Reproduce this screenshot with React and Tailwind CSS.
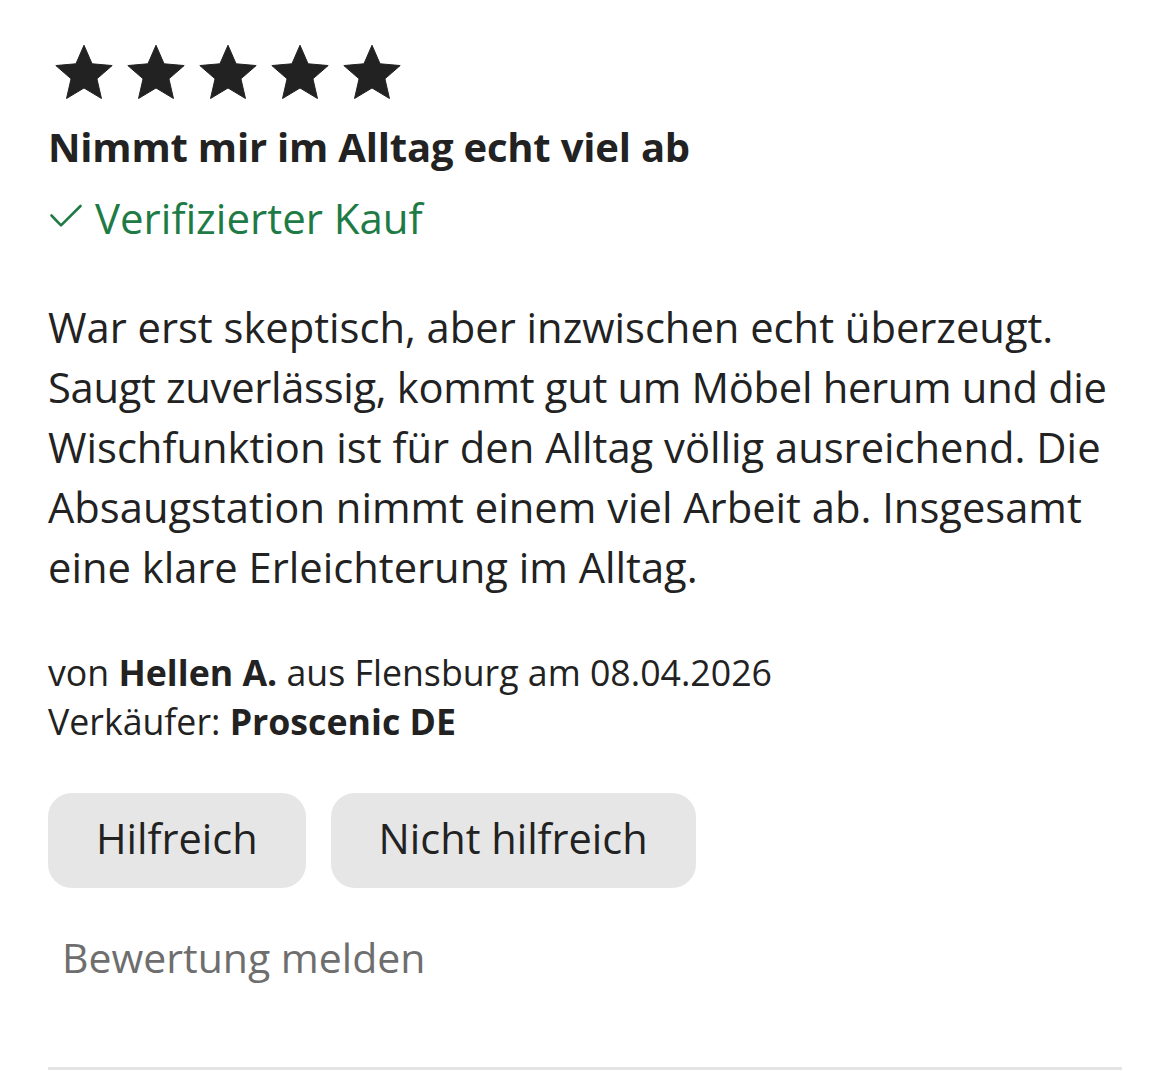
import React from "react";

function Star() {
  return (
    <svg width="68" height="68" viewBox="0 0 24 24" className="shrink-0">
      <path
        d="M12 2.2l2.85 6.55 7.1.62-5.38 4.68 1.6 6.95L12 17.3l-6.17 3.7 1.6-6.95L2.05 9.37l7.1-.62z"
        fill="#222222"
        stroke="#222222"
        strokeWidth="0.35"
        strokeLinejoin="round"
      />
    </svg>
  );
}

const bodyLines = [
  "War erst skeptisch, aber inzwischen echt überzeugt.",
  "Saugt zuverlässig, kommt gut um Möbel herum und die",
  "Wischfunktion ist für den Alltag völlig ausreichend. Die",
  "Absaugstation nimmt einem viel Arbeit ab. Insgesamt",
  "eine klare Erleichterung im Alltag.",
];

export default function App() {
  return (
    <div className="w-[1170px] h-[1090px] bg-white px-12 overflow-hidden font-['Open_Sans',sans-serif] text-[#222222]">
      <div className="mt-[39px] ml-[2px] flex gap-[4px]">
        <Star />
        <Star />
        <Star />
        <Star />
        <Star />
      </div>

      <h2 className="mt-[16px] text-[40px] leading-[48px] font-bold tracking-[-0.2px]">
        Nimmt mir im Alltag echt viel ab
      </h2>

      <div className="mt-[23px] flex items-center text-[#1e7b46]">
        <svg width="34" height="26" viewBox="0 0 34 26" className="ml-[1px] mr-[12px] -mt-[2px]" fill="none">
          <path d="M2.5 11.5l9.5 9.8L31.5 2" stroke="#1e7b46" strokeWidth="2.6" strokeLinecap="round" strokeLinejoin="round" />
        </svg>
        <span className="text-[42px] leading-[48px]">Verifizierter Kauf</span>
      </div>

      <p className="mt-[55px] text-[41.7px] leading-[60px] whitespace-nowrap">
        {bodyLines.map((l, i) => (
          <span key={i} className={i === 1 ? "block tracking-[-0.3px]" : "block"}>
            {l}
          </span>
        ))}
      </p>

      <div className="mt-[51px] text-[35.7px] leading-[49px]">
        <div>
          von <span className="font-bold">Hellen A.</span> aus Flensburg am 08.04.2026
        </div>
        <div>
          Verkäufer: <span className="font-bold">Proscenic DE</span>
        </div>
      </div>

      <div className="mt-[47px] flex gap-[25px]">
        <button className="h-[95px] px-12 pb-[6px] rounded-[24px] bg-[#e6e6e6] text-[41.5px] leading-[48px] text-[#222222]">
          Hilfreich
        </button>
        <button className="h-[95px] px-12 pb-[6px] rounded-[24px] bg-[#e6e6e6] text-[41.5px] leading-[48px] text-[#222222]">
          Nicht hilfreich
        </button>
      </div>

      <div className="mt-[45px] ml-[14px] text-[41px] leading-[48px] text-[#6e6e6e]">Bewertung melden</div>

      <div className="mt-[86px] h-[3px] bg-[#e4e4e4]" />
    </div>
  );
}
